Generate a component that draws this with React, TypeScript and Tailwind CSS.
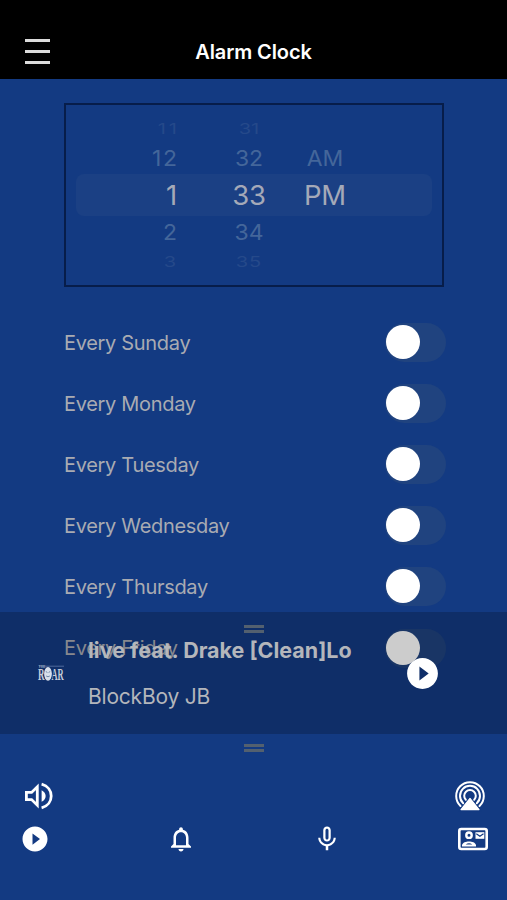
import type { ReactNode } from "react";
import { MdMicNone, MdNotificationsNone, MdPlayCircleFilled } from "react-icons/md";

const days = ["Sunday", "Monday", "Tuesday", "Wednesday", "Thursday", "Friday"];

const pickerRows = [
  { hour: "11", minute: "31", period: "", row: "h-[26px] text-[#25498a]", hourText: "tracking-[3px] -mr-[3px]", text: "text-[20px] scale-y-[0.75]" },
  { hour: "12", minute: "32", period: "AM", row: "h-[33px] text-[#44669a]", hourText: "tracking-[1.5px] -mr-[1.5px]", text: "text-[23px] scale-y-[0.95]" },
  { hour: "1", minute: "33", period: "PM", row: "h-[42px] rounded-lg bg-[#1b4084] text-[#a4a9b8]", hourText: "", text: "text-[27.5px] tracking-[-0.3px]" },
  { hour: "2", minute: "34", period: "", row: "h-[32px] text-[#44669a]", hourText: "", text: "text-[23px] scale-y-[0.95]" },
  { hour: "3", minute: "35", period: "", row: "h-[26px] text-[#25498a]", hourText: "", text: "text-[20px] scale-y-[0.75] tracking-[1px]" },
];

function TimePicker() {
  return (
    <div className="mt-[24px] ml-[64px] flex h-[184px] w-[380px] flex-col border-2 border-[#071d4a] px-[10px] pt-[10px]">
      {pickerRows.map((r) => (
        <div key={r.hour} className={`flex items-center pt-px ${r.row}`}>
          <span className="flex w-[101px] justify-end">
            <span className={`${r.text} ${r.hourText}`}>{r.hour}</span>
          </span>
          <span className={`ml-[44px] w-[56px] text-center ${r.text}`}>{r.minute}</span>
          <span className={`ml-[18px] w-[60px] text-center ${r.text}`}>{r.period}</span>
        </div>
      ))}
    </div>
  );
}

function DayRow({ day }: { day: string }) {
  return (
    <div className="flex h-[61.1px] items-center justify-between">
      <span className="text-[20px] tracking-[-0.32px] text-[#a9abb2]">Every {day}</span>
      <span className="flex h-[39px] w-[61px] items-center rounded-full bg-[#20437f] pb-px pl-px">
        <span className="size-[34px] rounded-full bg-white" />
      </span>
    </div>
  );
}

function Grip() {
  return (
    <div className="flex w-[20px] flex-col gap-[2px]">
      <span className="h-[3px] bg-[#53606f]" />
      <span className="h-[3px] bg-[#53606f]" />
    </div>
  );
}

function RoarLogo() {
  return (
    <svg viewBox="0 0 28 18" className="h-[18px] w-[28px] overflow-visible" fill="#c5ccda">
      <path d="M2 2.2H27" stroke="#6078a8" strokeWidth=".8" />
      <text x="1.5" y="3.6" fontSize="3.5" fontFamily="Liberation Serif, serif">THE</text>
      <text x="1" y="15.8" fontSize="16.5" textLength="6.5" lengthAdjust="spacingAndGlyphs" fontFamily="Liberation Serif, serif" fontWeight="bold">R</text>
      <text x="14.5" y="15.8" fontSize="16.5" textLength="12.2" lengthAdjust="spacingAndGlyphs" fontFamily="Liberation Serif, serif" fontWeight="bold">AR</text>
      <ellipse cx="11" cy="9.8" rx="3.9" ry="6.9" fill="#d8dfeb" />
      <path d="M8.8 7.5l1.6 1M13.2 7.5l-1.6 1M9.2 12q1.8 1.5 3.6 0" stroke="#587097" strokeWidth=".8" fill="none" />
    </svg>
  );
}

function VolumeIcon() {
  return (
    <svg viewBox="0 0 32 32" className="size-[32px] shrink-0" fill="none" stroke="white" strokeWidth="2.8">
      <path d="M4.4 12.4H9.6L15.3 6.8V25.2L9.6 19.6H4.4Z" />
      <path d="M19.6 10.2C25 13 25 19 19.6 21.8Z" fill="white" stroke="none" />
      <path d="M19.6 4.2C32.4 7.5 32.4 24.5 19.6 27.8" />
    </svg>
  );
}

function AirPlayIcon() {
  return (
    <svg viewBox="0 0 32 32" className="size-[32px]" fill="none" stroke="white" strokeWidth="2">
      <path d="M6.5 26A13.8 13.8 0 1 1 25.5 26" strokeLinecap="round" />
      <path d="M9.2 23.2A10 10 0 1 1 22.8 23.2" strokeLinecap="round" />
      <path d="M11.8 19.8A5.8 5.8 0 1 1 20.2 19.8" strokeLinecap="round" />
      <path d="M16 19.5L24.6 29.8H7.4Z" fill="#133a82" stroke="#133a82" strokeWidth="3" />
      <path d="M16 18.5L25 29.6H7Z" fill="white" strokeWidth="1.2" strokeLinejoin="round" />
    </svg>
  );
}

function ContactIcon() {
  return (
    <svg viewBox="0 0 32 32" className="size-[32px]" fill="none" stroke="white">
      <rect x="2.3" y="6" width="27.4" height="20" rx="2" strokeWidth="2.6" />
      <circle cx="12" cy="12.2" r="2.7" strokeWidth="2.4" />
      <path d="M5 23.6V22C6.3 17.4 17.7 17.4 19 22V23.6Z" fill="white" stroke="none" />
      <path d="M8.7 21.4Q12 19.2 15.3 21.4Z" fill="#133a82" stroke="none" />
      <rect x="18.5" y="9.2" width="8.8" height="6.6" fill="white" stroke="none" />
      <path d="M19.3 10.7L22.9 13.2L26.5 10.7" stroke="#133a82" strokeWidth="1.2" />
    </svg>
  );
}

function IconSlot({ children }: { children: ReactNode }) {
  return <button className="flex h-[32px] w-[32px] items-center justify-center">{children}</button>;
}

export default function App() {
  return (
    <div className="flex h-[900px] w-[507px] flex-col overflow-hidden bg-[#133a82] font-['Inter',sans-serif]">
      <header className="grid h-[79px] shrink-0 grid-cols-3 items-center bg-black px-[25px] pt-[24px] text-white">
        <button className="flex w-[25px] flex-col gap-[8px]">
          <span className="h-[3px] w-full bg-[#dcdcdc]" />
          <span className="h-[3px] w-full bg-[#dcdcdc]" />
          <span className="h-[3px] w-full bg-[#dcdcdc]" />
        </button>
        <h1 className="pt-px text-center text-[20px] font-semibold tracking-[-0.1px] whitespace-nowrap">Alarm Clock</h1>
      </header>

      <main className="relative h-[655px] shrink-0 overflow-hidden">
        <TimePicker />
        <div className="mt-[25px] pr-[61px] pl-[64px]">
          {days.map((d) => (
            <DayRow key={d} day={d} />
          ))}
        </div>
        <section className="absolute inset-x-0 bottom-0 flex h-[122px] flex-col bg-black/20">
          <div className="flex justify-center pt-[13px]">
            <Grip />
          </div>
          <div className="flex h-[80px] items-center pr-[66px] pl-[37px]">
            <RoarLogo />
            <div className="ml-[23px] flex flex-col gap-[17px] whitespace-nowrap text-[#b4b6bb]">
              <span className="text-[21.5px] leading-[30px] font-bold">live feat. Drake [Clean]Lo</span>
              <span className="text-[21px] leading-[30px] tracking-[-0.2px]">BlockBoy JB</span>
            </div>
            <button className="ml-auto text-white">
              <MdPlayCircleFilled size={37} />
            </button>
          </div>
        </section>
      </main>

      <footer className="flex flex-1 flex-col text-white">
        <div className="flex justify-center pt-[10px]">
          <Grip />
        </div>
        <div className="mt-[28px] flex justify-between pr-[21px] pl-[22px]">
          <IconSlot><VolumeIcon /></IconSlot>
          <IconSlot><AirPlayIcon /></IconSlot>
        </div>
        <nav className="mt-[11px] flex justify-between pr-[18px] pl-[19px]">
          <IconSlot><MdPlayCircleFilled size={30} /></IconSlot>
          <IconSlot><MdNotificationsNone size={30} /></IconSlot>
          <IconSlot><MdMicNone size={30} /></IconSlot>
          <IconSlot><ContactIcon /></IconSlot>
        </nav>
      </footer>
    </div>
  );
}
